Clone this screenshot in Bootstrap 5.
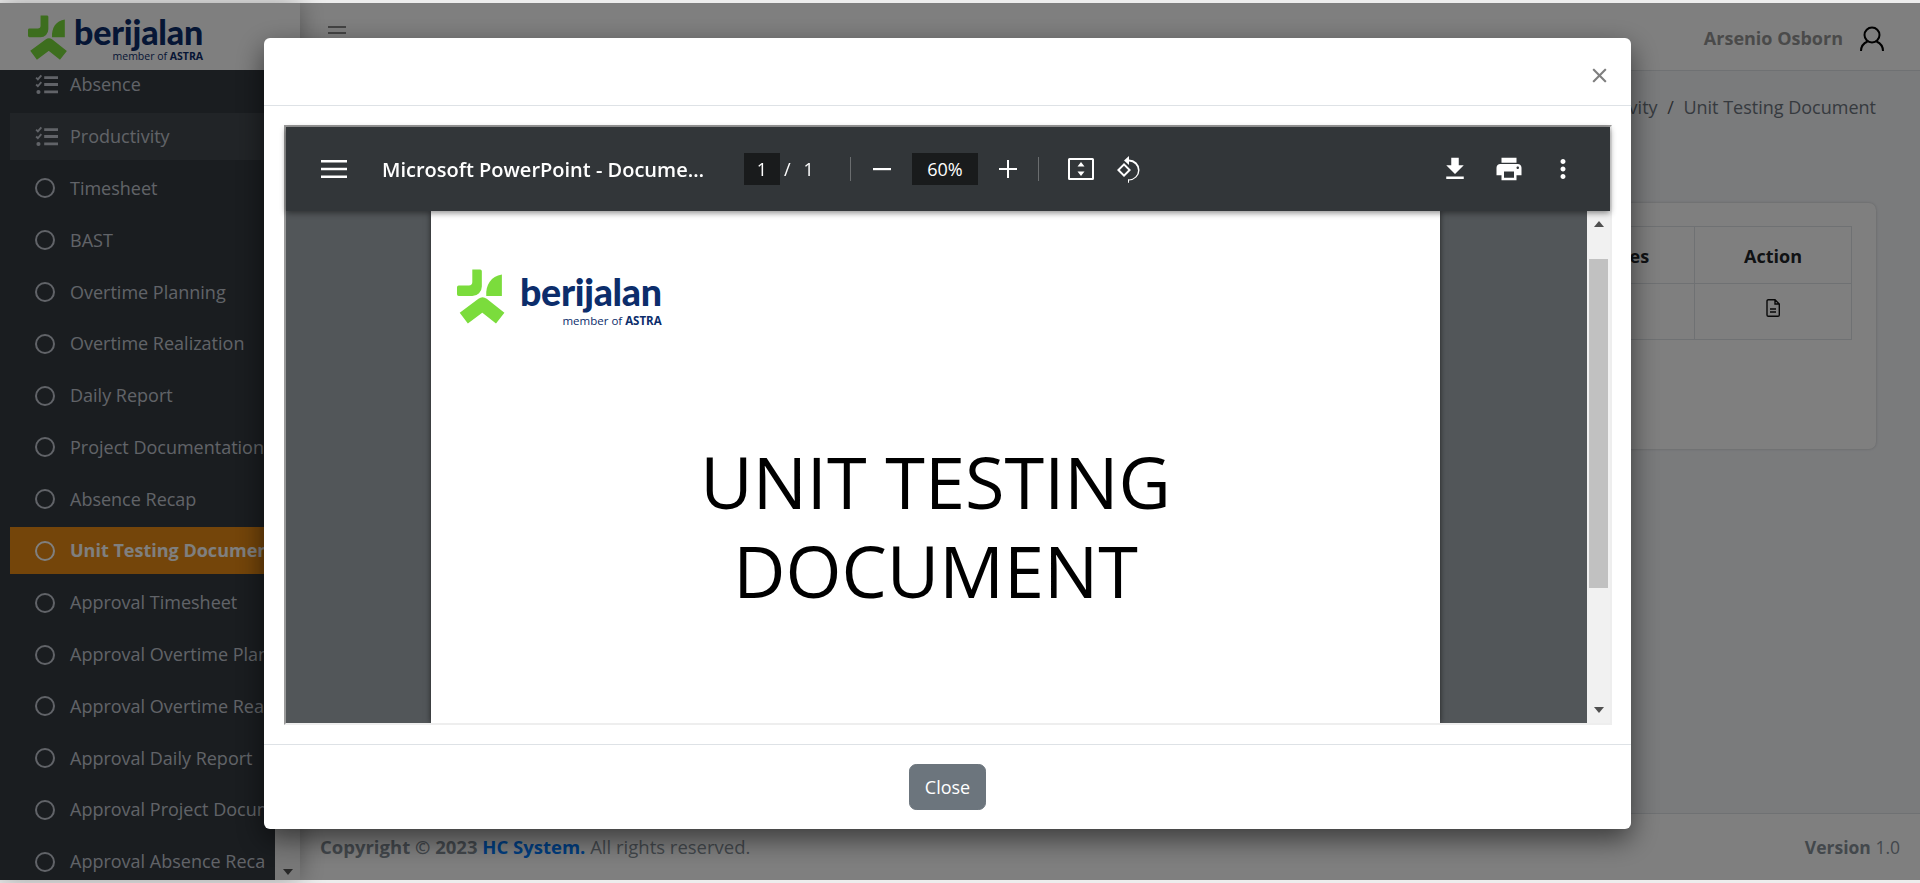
<!DOCTYPE html>
<html lang="en">
<head>
  <meta charset="UTF-8" />
  <meta name="viewport" content="width=device-width, initial-scale=1.0" />
  <title>Unit Testing Document</title>
  <link href="https://cdn.jsdelivr.net/npm/bootstrap@5.3.3/dist/css/bootstrap.min.css" rel="stylesheet" />
  <style>
    html { font-size: 19.2px; }
    body { font-family: "Open Sans", "Liberation Sans", sans-serif; font-size: 18px; background: #ededed; height: 883px; overflow: hidden; padding: 3px 0; }
    .app-shell { height: 877px; }
    .side-panel { width: 300px; background: #343a40; box-shadow: 0 0 24px rgba(0,0,0,.35); z-index: 1; }
    .side-logo { height: 68px; background: #fff; padding: 12px 0 0 28px; gap: 5px; z-index: 1; }
    .side-menu { width: 255px; margin: -9px 10px 0; overflow: hidden; }
    .side-item { height: 47px; margin-bottom: 4.8px; padding-left: 25px; gap: 15px; color: #c2c7d0; white-space: nowrap; }
    .side-item.is-open { background: rgba(255,255,255,.08); }
    .side-item.is-active { background: #e88a14; color: #fff; font-weight: 700; }
    .side-item svg { flex: none; width: 20px; height: 20px; }
    .side-item svg.icon-checks { width: 23px; height: 23px; margin-right: -3px; }
    .side-bar { width: 25px; background: #f1f1f1; }
    .arrow-up { width: 0; height: 0; border: 5px solid transparent; border-top: 0; border-bottom: 6px solid #505050; }
    .arrow-down { width: 0; height: 0; border: 5px solid transparent; border-bottom: 0; border-top: 6px solid #505050; }
    .top-head { height: 68px; background: #fff; border-bottom: 1px solid #dee2e6; padding: 4px 36px 0 28px; }
    .head-lines { width: 18px; height: 14px; margin-top: -12px; border-top: 2px solid #888; border-bottom: 2px solid #888; position: relative; }
    .head-lines::before { content: ""; display: block; height: 2px; margin-top: 4px; background: #888; }
    .user-name { font-weight: 700; font-size: 18px; color: #959595; margin-right: 17px; }
    .page-body { background: #f4f6f9; padding: 0 44px 0 20px; }
    .crumbs { height: 72px; margin: 0; padding-top: 23px; font-size: 18px; }
    .crumbs .breadcrumb-item.active, .crumbs .breadcrumb-item a { color: #6c757d; text-decoration: none; }
    .data-card { height: 246px; margin-top: 60px; padding: 23px 24px 0 25px; border: 0; box-shadow: 0 0 3px rgba(0,0,0,.2); }
    .data-table th, .data-table td { height: 56.5px; text-align: center; vertical-align: middle; font-size: 18px; }
    .data-table th { padding-top: 11px; padding-bottom: 7px; }
    .data-table td { padding-top: 0; padding-bottom: 6px; }
    .data-table svg { display: block; margin: 0 auto; }
    .notes-col { width: 144px; }
    .action-col { width: 157px; }
    .page-foot { height: 67px; background: #fff; border-top: 1px solid #dee2e6; padding: 0 20px; color: #869099; font-size: 18.5px; }
    .page-foot a { color: #007bff; text-decoration: none; }
    .foot-version { font-size: 17.5px; }

    .modal-backdrop.show { opacity: .5; top: 3px; height: 877px; }
    .preview-modal { padding-right: 25px; }
    .preview-dialog { max-width: 1367px; margin: 38px auto 0; }
    .preview-modal .modal-content { border: 0; border-radius: 6px; box-shadow: 0 10px 28px rgba(0,0,0,.55); }
    .preview-modal .modal-header { height: 68px; padding: 0 23px 0 0; }
    .preview-modal .btn-close { font-size: 17px; margin: 8px 0 0 auto; padding: 0; opacity: .5; }
    .preview-modal .modal-body { padding: 18.5px 20px 19.5px; }
    .preview-modal .modal-footer { height: 85px; padding: 0; }
    .preview-modal .btn-secondary { width: 77px; height: 46px; font-size: 18px; padding: 0; margin: 0; }

    .pdf-frame { height: 600px; width: 1328px; border: 2px solid; border-color: #9a9a9a #eee #eee #9a9a9a; }
    .pdf-tools { height: 84px; background: #323639; color: #fff; position: relative; z-index: 2; box-shadow: 0 2px 6px rgba(0,0,0,.45); padding-right: 32px; }
    .pdf-tools svg { flex: none; fill: #fff; }
    .pdf-title { width: 322px; margin: 0 40px 0 35px; padding-top: 3px; font-size: 20px; font-weight: 600; white-space: nowrap; overflow: hidden; text-overflow: ellipsis; }
    .pdf-box { height: 32px; background: #191b1c; font-size: 18px; padding-top: 2px; }
    .pdf-num { padding-top: 2px; }
    .pdf-sep { width: 1px; height: 24px; background: #6a6d6f; }
    .pdf-view { height: 512px; }
    .pdf-stage { background: #525659; overflow: hidden; padding-right: 2px; }
    .pdf-sheet { width: 1009px; margin: 0 auto; height: 512px; background: #fff; box-shadow: 0 0 6px rgba(0,0,0,.6); overflow: hidden; }
    .sheet-logo { padding: 58px 0 0 26px; gap: 13px; }
    .sheet-brand { padding-top: 4px; }
    .sheet-title { margin: 0; padding-top: 110px; text-align: center; font-size: 72px; line-height: 89px; font-weight: 400; color: #000; }
    .pdf-scroll { width: 23px; background: #f1f1f1; padding: 10px 0; }
    .pdf-thumb { width: 19px; height: 329px; margin-top: 32px; background: #c1c1c1; }

    .brand-text { font-family: Lato, "Open Sans", sans-serif; font-weight: 900; color: #0c2d6b; line-height: 1; }
    .brand-sub { font-family: "Open Sans", sans-serif; color: #0c2d6b; line-height: 1; text-align: right; }
    .brand-lg { font-size: 37.5px; letter-spacing: -.3px; }
    .brand-lg-sub { font-size: 11.5px; margin-top: 5px; }
    .brand-sm { font-size: 34px; letter-spacing: -.2px; }
    .brand-sm-sub { font-size: 10.500px; margin-top: 2px; }
    .mark-green { fill: #7bdc3c; }
    .mark-stroke { fill: none; stroke: #7bdc3c; stroke-width: 40; stroke-linejoin: round; }
  </style>
</head>
<body>
  <svg width="0" height="0" class="d-block">
    <defs>
      <symbol id="mark" viewBox="0 0 147 162">
        <path class="mark-green" d="M45 0h23a5 5 0 0 1 5 5v45a28 28 0 0 1-28 28H5a5 5 0 0 1-5-5V52a5 5 0 0 1 5-5h30a10 10 0 0 0 10-10z" />
        <path class="mark-green" d="M132 15V78H86C84 45 100 20 132 15z" />
        <path class="mark-stroke" d="M20 143L75 102L127 143" />
      </symbol>
      <symbol id="ring" viewBox="0 0 20 20">
        <circle cx="10" cy="10" r="9" fill="none" stroke="currentColor" stroke-width="2" />
      </symbol>
      <symbol id="checks" viewBox="0 0 20 20">
        <path d="M1 4l1.500 1.500L5.500 2M1 10l1.500 1.500L5.500 8" fill="none" stroke="currentColor" stroke-width="1.600" />
        <circle cx="3" cy="16.500" r="1.800" fill="currentColor" />
        <path d="M8 4h12M8 10h12M8 16.500h12" stroke="currentColor" stroke-width="2.400" />
      </symbol>
    </defs>
  </svg>

  <div class="app-shell d-flex">
    <aside class="side-panel d-flex flex-column flex-shrink-0">
      <div class="side-logo d-flex position-relative">
        <svg width="41" height="46"><use href="#mark" /></svg>
        <div>
          <div class="brand-text brand-sm">berijalan</div>
          <div class="brand-sub brand-sm-sub">member of <b>ASTRA</b></div>
        </div>
      </div>
      <div class="d-flex flex-grow-1 overflow-hidden">
        <nav class="side-menu flex-shrink-0">
          <div class="side-item d-flex align-items-center"><svg class="icon-checks"><use href="#checks" /></svg>Absence</div>
          <div class="side-item is-open d-flex align-items-center"><svg class="icon-checks"><use href="#checks" /></svg>Productivity</div>
          <div class="side-item d-flex align-items-center"><svg><use href="#ring" /></svg>Timesheet</div>
          <div class="side-item d-flex align-items-center"><svg><use href="#ring" /></svg>BAST</div>
          <div class="side-item d-flex align-items-center"><svg><use href="#ring" /></svg>Overtime Planning</div>
          <div class="side-item d-flex align-items-center"><svg><use href="#ring" /></svg>Overtime Realization</div>
          <div class="side-item d-flex align-items-center"><svg><use href="#ring" /></svg>Daily Report</div>
          <div class="side-item d-flex align-items-center"><svg><use href="#ring" /></svg>Project Documentation</div>
          <div class="side-item d-flex align-items-center"><svg><use href="#ring" /></svg>Absence Recap</div>
          <div class="side-item is-active d-flex align-items-center"><svg><use href="#ring" /></svg>Unit Testing Document</div>
          <div class="side-item d-flex align-items-center"><svg><use href="#ring" /></svg>Approval Timesheet</div>
          <div class="side-item d-flex align-items-center"><svg><use href="#ring" /></svg>Approval Overtime Planning</div>
          <div class="side-item d-flex align-items-center"><svg><use href="#ring" /></svg>Approval Overtime Realization</div>
          <div class="side-item d-flex align-items-center"><svg><use href="#ring" /></svg>Approval Daily Report</div>
          <div class="side-item d-flex align-items-center"><svg><use href="#ring" /></svg>Approval Project Documentation</div>
          <div class="side-item d-flex align-items-center"><svg><use href="#ring" /></svg>Approval Absence Recap</div>
        </nav>
        <div class="side-bar d-flex justify-content-center align-items-end pb-1"><div class="arrow-down"></div></div>
      </div>
    </aside>

    <div class="d-flex flex-column flex-grow-1">
      <header class="top-head d-flex align-items-center">
        <div class="head-lines"></div>
        <span class="user-name ms-auto">Arsenio Osborn</span>
        <svg width="24" height="26" viewBox="0 0 24 26" fill="none" stroke="#000" stroke-width="2">
          <circle cx="12" cy="9" r="7.500" />
          <path d="M1 25c0-5 3-8 6.500-9.500M23 25c0-5-3-8-6.500-9.500" />
        </svg>
      </header>
      <main class="page-body flex-grow-1">
        <ol class="breadcrumb crumbs justify-content-end">
          <li class="breadcrumb-item"><a href="#">Home</a></li>
          <li class="breadcrumb-item"><a href="#">Productivity</a></li>
          <li class="breadcrumb-item active">Unit Testing Document</li>
        </ol>
        <div class="card data-card">
          <table class="table table-bordered data-table mb-0">
            <thead>
              <tr><th>No</th><th>Project</th><th>Document</th><th class="notes-col">Notes</th><th class="action-col">Action</th></tr>
            </thead>
            <tbody>
              <tr>
                <td>1</td><td></td><td></td><td></td>
                <td>
                  <svg width="14" height="18" viewBox="0 0 14 18" fill="none" stroke="#111" stroke-width="1.400">
                    <path d="M1 2a1.300 1.300 0 0 1 1.300-1.300H9L13.300 5v11a1.300 1.300 0 0 1-1.300 1.300H2.300A1.300 1.300 0 0 1 1 16zM9 .7V5h4.300M4 10h6M4 13h6" />
                  </svg>
                </td>
              </tr>
            </tbody>
          </table>
        </div>
      </main>
      <footer class="page-foot d-flex justify-content-between align-items-center">
        <span><strong>Copyright © 2023 <a href="#">HC System.</a></strong> All rights reserved.</span>
        <span class="foot-version"><strong>Version</strong> 1.0</span>
      </footer>
    </div>
  </div>

  <div class="modal-backdrop show"></div>
  <div class="modal preview-modal d-block">
    <div class="modal-dialog preview-dialog">
      <div class="modal-content">
        <div class="modal-header">
          <button type="button" class="btn-close" aria-label="Close"></button>
        </div>
        <div class="modal-body">
          <div class="pdf-frame d-flex flex-column">
            <div class="pdf-tools d-flex align-items-center flex-shrink-0">
              <svg style="margin-left:35px" width="26" height="18" viewBox="0 0 26 18"><path d="M0 0h26v2.500H0zM0 7.700h26v2.500H0zM0 15.500h26V18H0z" /></svg>
              <div class="pdf-title">Microsoft PowerPoint - Document.pdf</div>
              <div class="pdf-box d-flex align-items-center justify-content-center" style="width:36px">1</div>
              <span class="pdf-num" style="margin-left:4px">/</span>
              <span class="pdf-num" style="margin-left:13px">1</span>
              <div class="pdf-sep" style="margin-left:36px"></div>
              <svg style="margin-left:21px" width="20" height="20" viewBox="0 0 20 20"><path d="M1 9h18v2.200H1z" /></svg>
              <div class="pdf-box d-flex align-items-center justify-content-center" style="width:66px;margin-left:20px">60%</div>
              <svg style="margin-left:20px" width="20" height="20" viewBox="0 0 20 20"><path d="M9 1h2v8h8v2h-8v8H9v-8H1V9h8z" /></svg>
              <div class="pdf-sep" style="margin-left:20px"></div>
              <svg style="margin-left:28px" width="28" height="24" viewBox="0 0 28 24"><path fill-rule="evenodd" d="M2.500 1h23A1.500 1.500 0 0 1 27 2.500v19a1.500 1.500 0 0 1-1.500 1.500h-23A1.500 1.500 0 0 1 1 21.500v-19A1.500 1.500 0 0 1 2.500 1zM3 3v18h22V3zM14 5l3.500 4.500h-7zM14 19l-3.500-4.500h7z" /></svg>
              <svg style="margin-left:20px" width="28" height="28" viewBox="0 0 28 28"><path fill-rule="evenodd" d="M9 8l7 7-7 7-7-7zM9 10.800L4.800 15 9 19.200l4.200-4.200z" /><path d="M14 1v3.400a10.500 10.500 0 0 1 0 21V28l-1-.5v-.1V24l1 .500a9 9 0 0 0 0-18V10L9 5.500z" /></svg>
              <svg class="ms-auto" width="30" height="30" viewBox="0 0 24 24"><path d="M19 9h-4V3H9v6H5l7 7 7-7zM5 18v2h14v-2H5z" /></svg>
              <svg style="margin-left:24px" width="30" height="30" viewBox="0 0 24 24"><path d="M19 8H5c-1.660 0-3 1.340-3 3v6h4v4h12v-4h4v-6c0-1.660-1.340-3-3-3zm-3 11H8v-5h8v5zm3-7c-.550 0-1-.450-1-1s.450-1 1-1 1 .450 1 1-.450 1-1 1zm-1-9H6v4h12V3z" /></svg>
              <svg style="margin-left:24px" width="30" height="30" viewBox="0 0 24 24"><path d="M12 8c1.100 0 2-.900 2-2s-.900-2-2-2-2 .900-2 2 .900 2 2 2zm0 2c-1.100 0-2 .900-2 2s.900 2 2 2 2-.900 2-2-.900-2-2-2zm0 6c-1.100 0-2 .900-2 2s.900 2 2 2 2-.900 2-2-.900-2-2-2z" /></svg>
            </div>
            <div class="pdf-view d-flex">
              <div class="pdf-stage flex-grow-1">
                <div class="pdf-sheet">
                  <div class="sheet-logo d-flex">
                    <svg width="50" height="56"><use href="#mark" /></svg>
                    <div class="sheet-brand">
                      <div class="brand-text brand-lg">berijalan</div>
                      <div class="brand-sub brand-lg-sub">member of <b>ASTRA</b></div>
                    </div>
                  </div>
                  <h1 class="sheet-title">UNIT TESTING<br />DOCUMENT</h1>
                </div>
              </div>
              <div class="pdf-scroll d-flex flex-column align-items-center flex-shrink-0">
                <div class="arrow-up"></div>
                <div class="pdf-thumb"></div>
                <div class="arrow-down mt-auto"></div>
              </div>
            </div>
          </div>
        </div>
        <div class="modal-footer justify-content-center">
          <button type="button" class="btn btn-secondary">Close</button>
        </div>
      </div>
    </div>
  </div>

  <script src="https://cdn.jsdelivr.net/npm/bootstrap@5.3.3/dist/js/bootstrap.bundle.min.js"></script>
</body>
</html>
